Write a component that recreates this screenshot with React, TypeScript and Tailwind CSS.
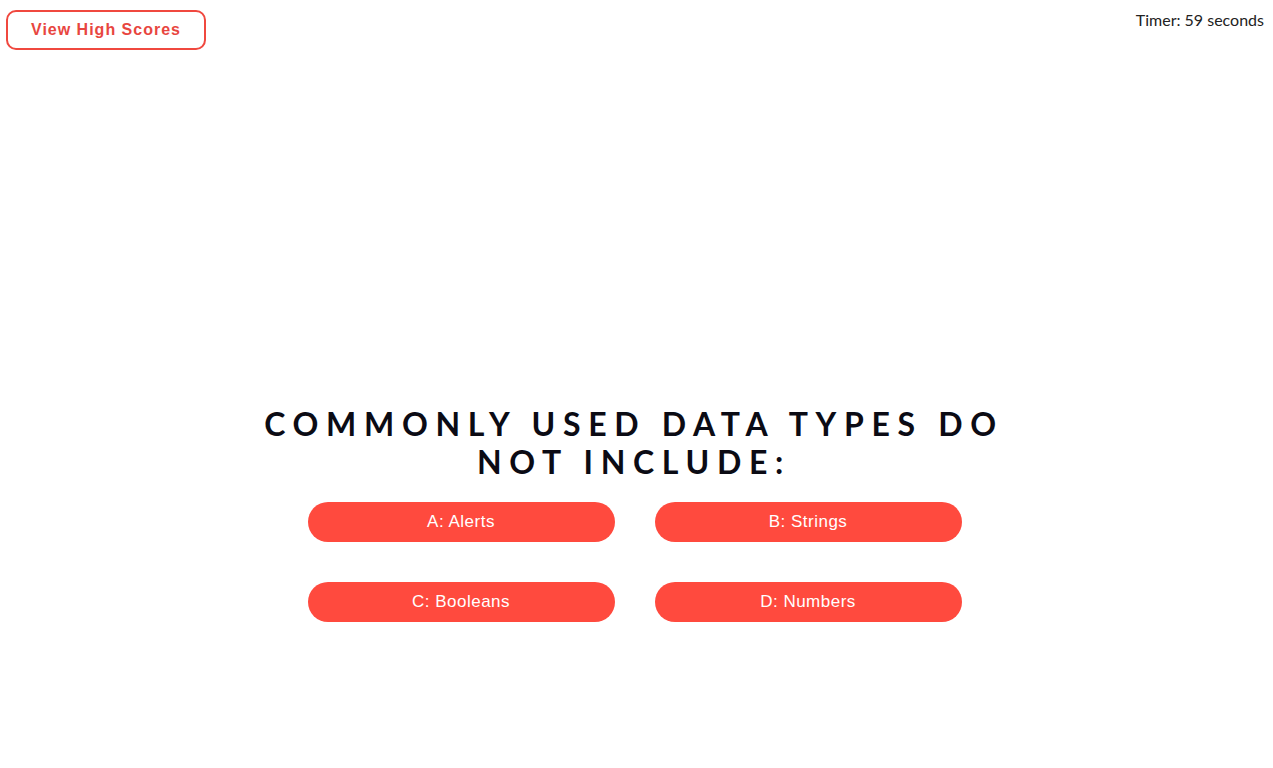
const answers = ['A: Alerts', 'B: Strings', 'C: Booleans', 'D: Numbers'];

export default function App() {
  return (
    <div className="min-h-[768px] w-full bg-white">
      <header className="flex items-start justify-between pl-[6px] pr-[9px] pt-[10px]">
        <button className="h-[40px] w-[200px] rounded-[10px] border-2 border-[#f0483f] font-['Liberation_Sans',Arial,sans-serif] text-[16px] font-bold tracking-[1px] text-[#e8463f]">
          View High Scores
        </button>
        <div className="font-['Lato',sans-serif] text-[16px] leading-[19px] text-[#222]">
          Timer: 59 seconds
        </div>
      </header>

      <main className="mt-[355px] flex flex-col items-center pr-[4px]">
        <h1 className="w-[770px] pr-[1px] text-center font-['Lato',sans-serif] text-[32px] font-bold uppercase leading-[38px] tracking-[0.24em] text-[#0b0b14]">
          Commonly used data types do not include:
        </h1>
        <div className="mt-[21px] grid grid-cols-2 gap-x-[40px] gap-y-[40px]">
          {answers.map((a) => (
            <button
              key={a}
              className="h-[40px] w-[307px] rounded-full bg-[#ff4a3e] font-['Liberation_Sans',Arial,sans-serif] text-[17px] tracking-[0.5px] text-white"
            >
              {a}
            </button>
          ))}
        </div>
      </main>
    </div>
  );
}
